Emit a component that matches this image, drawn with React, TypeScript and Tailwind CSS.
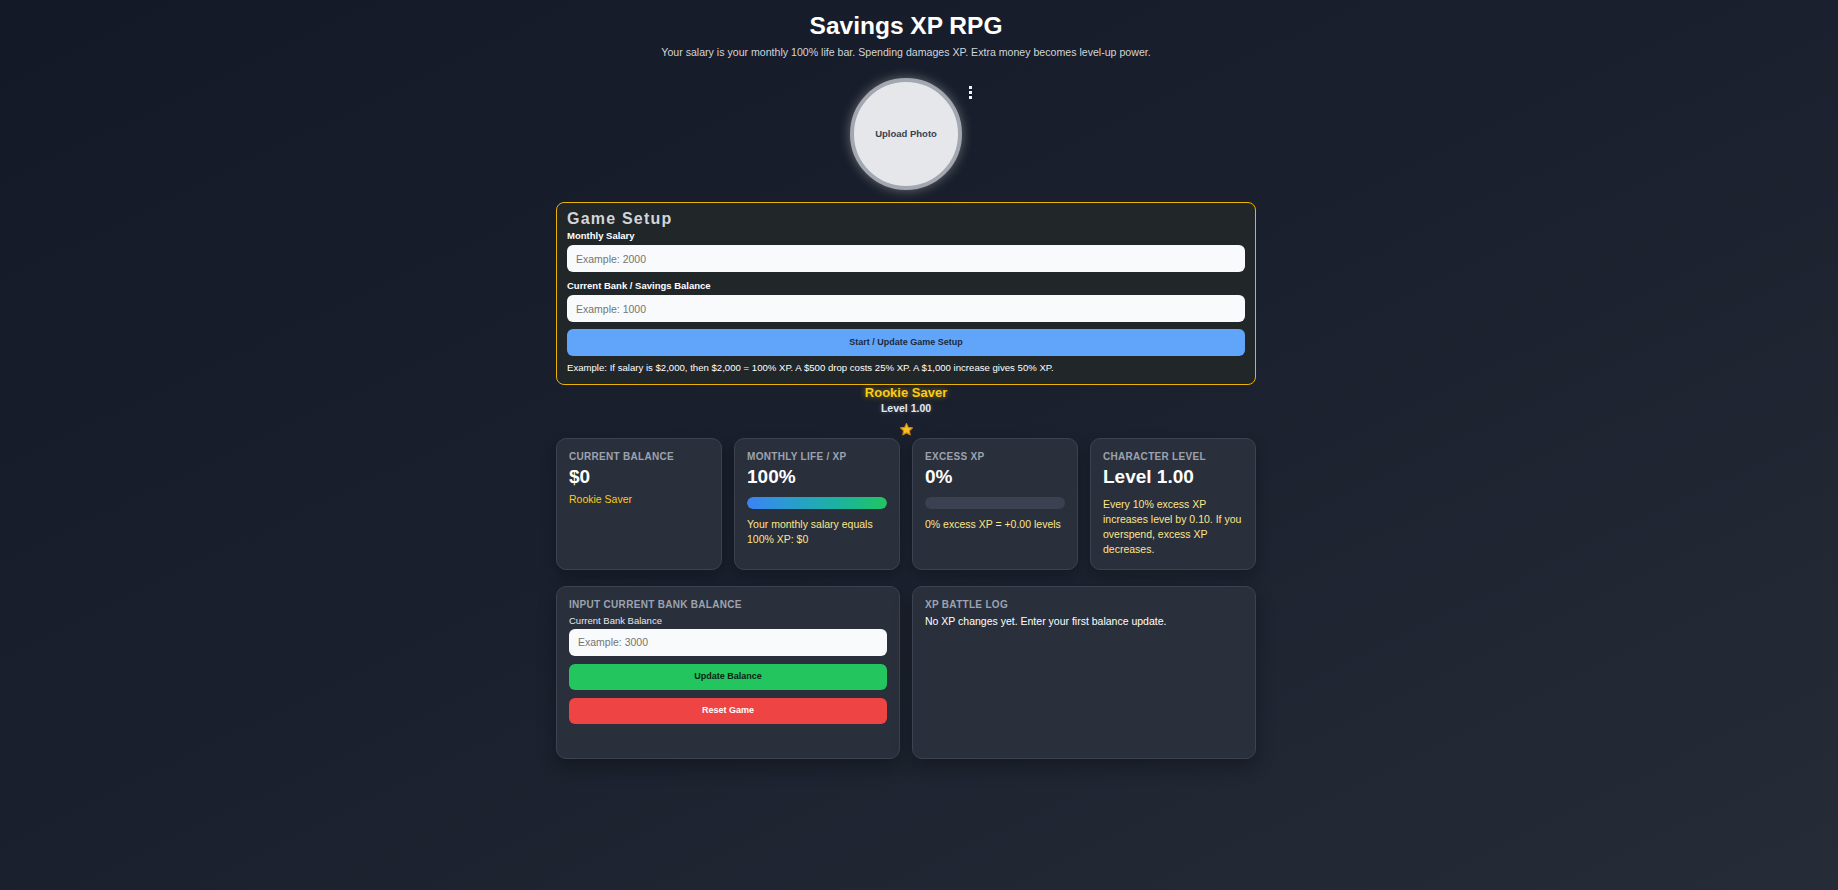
import React from "react";

const font = { fontFamily: '"Liberation Sans", Arial, sans-serif' };

const Label = ({ children }: { children: React.ReactNode }) => (
  <p className="text-[10px] leading-[12px] font-bold uppercase tracking-[0.03em] text-[#9ca3af]">
    {children}
  </p>
);

const Star = () => (
  <svg width="15" height="15" viewBox="0 0 24 24">
    <path
      d="M12 2.5l2.9 6.1 6.6.8-4.9 4.6 1.3 6.6L12 17.3l-5.9 3.3 1.3-6.6-4.9-4.6 6.6-.8z"
      fill="#fbbf24"
      stroke="#d08a0c"
      strokeWidth="1.8"
      strokeLinejoin="round"
    />
  </svg>
);

export default function App() {
  return (
    <div
      className="min-h-[890px] w-full bg-gradient-to-br from-[#131926] via-[#1a202d] to-[#262c37] text-white"
      style={font}
    >
      <div className="w-[1812px] flex flex-col items-center pt-3 pb-10">
        <h1 className="text-[24.5px] leading-[28px] font-bold text-white">Savings XP RPG</h1>
        <p className="mt-[6px] text-[10.6px] leading-[13px] text-[#d1d5db]">
          Your salary is your monthly 100% life bar. Spending damages XP. Extra money becomes level-up power.
        </p>

        <div className="relative mt-[19px]">
          <div className="w-[112px] h-[112px] rounded-full border-4 border-[#a3a7b0] bg-[#e5e7eb] shadow-[0_0_12px_rgba(255,255,255,0.35)] flex items-center justify-center">
            <span className="text-[9.5px] font-bold text-[#374151]">Upload Photo</span>
          </div>
          <div className="absolute left-[119px] top-[8px] flex flex-col gap-[2.5px]">
            <span className="w-[3px] h-[2.5px] bg-[#f1f5f9]" />
            <span className="w-[3px] h-[2.5px] bg-[#f1f5f9]" />
            <span className="w-[3px] h-[2.5px] bg-[#f1f5f9]" />
          </div>
        </div>

        <div className="mt-3 w-[700px] rounded-[8px] border border-[#eab308] bg-[#212628] px-[10px] pt-2 pb-[10px]">
          <h2 className="text-[16px] leading-4 font-bold tracking-[1.2px] text-[#d1d5db]">Game Setup</h2>
          <p className="mt-[3px] text-[9.5px] leading-[11px] font-bold text-white">Monthly Salary</p>
          <input
            className="mt-1 w-full h-[27px] rounded-[6px] bg-[#f8fafc] px-[9px] text-[10.5px] text-[#111827] placeholder:text-[#757575] outline-none"
            placeholder="Example: 2000"
          />
          <p className="mt-2 text-[9.5px] leading-[11px] font-bold text-white">Current Bank / Savings Balance</p>
          <input
            className="mt-1 w-full h-[27px] rounded-[6px] bg-[#f8fafc] px-[9px] text-[10.5px] text-[#111827] placeholder:text-[#757575] outline-none"
            placeholder="Example: 1000"
          />
          <button className="mt-[7px] w-full h-[27px] rounded-[6px] bg-[#60a5fa] text-[9px] font-bold text-[#1e293b]">
            Start / Update Game Setup
          </button>
          <p className="mt-[6px] text-[9.6px] leading-[12px] text-white">
            Example: If salary is $2,000, then $2,000 = 100% XP. A $500 drop costs 25% XP. A $1,000 increase gives 50% XP.
          </p>
        </div>

        <p className="text-[13px] leading-[15px] font-bold text-[#facc15] [text-shadow:0_0_6px_rgba(250,204,21,0.55)]">
          Rookie Saver
        </p>
        <p className="mt-[1.5px] text-[10.5px] leading-[12px] font-bold text-[#e2e8f0] [text-shadow:0_0_4px_rgba(255,255,255,0.25)]">
          Level 1.00
        </p>
        <div className="mt-[8px] h-[15px]">
          <Star />
        </div>

        <div className="mt-[1px] w-[700px] grid grid-cols-4 gap-3">
          <div className="rounded-[10px] border border-[#3c4250] bg-[#2a2f3c] p-3 shadow-[0_6px_14px_rgba(0,0,0,0.25)]">
            <Label>Current Balance</Label>
            <p className="mt-[3px] text-[19px] leading-[22px] font-bold">$0</p>
            <p className="mt-1 text-[10.5px] leading-[15px] text-[#facc15]">Rookie Saver</p>
          </div>
          <div className="rounded-[10px] border border-[#3c4250] bg-[#2a2f3c] p-3 shadow-[0_6px_14px_rgba(0,0,0,0.25)]">
            <Label>Monthly Life / XP</Label>
            <p className="mt-[3px] text-[19px] leading-[22px] font-bold">100%</p>
            <div className="mt-[9px] h-3 rounded-full bg-[#3a4150] overflow-hidden">
              <div className="h-full rounded-full bg-gradient-to-r from-[#3b82f6] to-[#22c55e]" style={{ width: "100%" }} />
            </div>
            <p className="mt-2 text-[10.5px] leading-[15px] text-[#fde68a]">
              Your monthly salary equals 100% XP: $0
            </p>
          </div>
          <div className="rounded-[10px] border border-[#3c4250] bg-[#2a2f3c] p-3 shadow-[0_6px_14px_rgba(0,0,0,0.25)]">
            <Label>Excess XP</Label>
            <p className="mt-[3px] text-[19px] leading-[22px] font-bold">0%</p>
            <div className="mt-[9px] h-3 rounded-full bg-[#3a4150] overflow-hidden">
              <div className="h-full rounded-full bg-gradient-to-r from-[#3b82f6] to-[#22c55e]" style={{ width: "0%" }} />
            </div>
            <p className="mt-2 text-[10.5px] leading-[15px] text-[#fde68a]">0% excess XP = +0.00 levels</p>
          </div>
          <div className="rounded-[10px] border border-[#3c4250] bg-[#2a2f3c] p-3 shadow-[0_6px_14px_rgba(0,0,0,0.25)]">
            <Label>Character Level</Label>
            <p className="mt-[3px] text-[19px] leading-[22px] font-bold">Level 1.00</p>
            <p className="mt-[9px] text-[10.5px] leading-[15px] text-[#fde68a]">
              Every 10% excess XP increases level by 0.10. If you overspend, excess XP decreases.
            </p>
          </div>
        </div>

        <div className="mt-4 w-[700px] grid grid-cols-2 gap-3">
          <div className="h-[173px] rounded-[10px] border border-[#3c4250] bg-[#2a2f3c] p-3 shadow-[0_8px_18px_rgba(0,0,0,0.3)]">
            <Label>Input Current Bank Balance</Label>
            <p className="mt-1 text-[9.5px] leading-[12px] text-[#e5e7eb]">Current Bank Balance</p>
            <input
              className="mt-[2px] w-full h-[27px] rounded-[6px] bg-[#f8fafc] px-[9px] text-[10.5px] text-[#111827] placeholder:text-[#757575] outline-none"
              placeholder="Example: 3000"
            />
            <button className="mt-2 w-full h-[26px] rounded-[6px] bg-[#22c55e] text-[9px] font-bold text-[#0b2415]">
              Update Balance
            </button>
            <button className="mt-2 w-full h-[26px] rounded-[6px] bg-[#ef4444] text-[9px] font-bold text-white">
              Reset Game
            </button>
          </div>
          <div className="h-[173px] rounded-[10px] border border-[#3c4250] bg-[#2a2f3c] p-3 shadow-[0_8px_18px_rgba(0,0,0,0.3)]">
            <Label>XP Battle Log</Label>
            <p className="mt-[3px] text-[10.5px] leading-[14px] text-white">
              No XP changes yet. Enter your first balance update.
            </p>
          </div>
        </div>
      </div>
    </div>
  );
}
